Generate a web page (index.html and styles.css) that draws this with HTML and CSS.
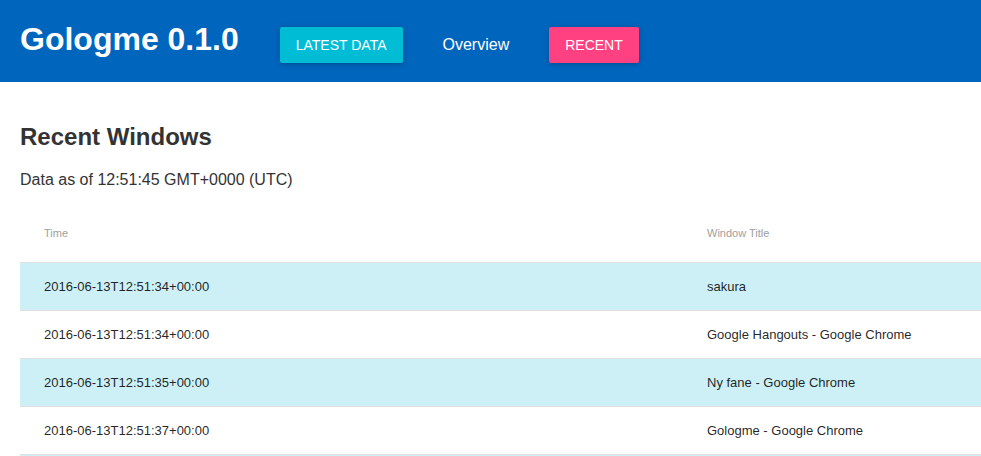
FILE: index.html
```html
<!DOCTYPE html>
<html>
<head>
<meta charset="utf-8">
<link rel="stylesheet" href="styles.css">
</head>
<body>
<header class="appbar">
  <h1 class="title">Gologme 0.1.0</h1>
  <nav class="nav">
    <a class="btn btn-cyan">LATEST DATA</a>
    <a class="btn btn-flat">Overview</a>
    <a class="btn btn-pink">RECENT</a>
  </nav>
</header>
<main class="content">
  <h2 class="heading">Recent Windows</h2>
  <p class="asof">Data as of 12:51:45 GMT+0000 (UTC)</p>
  <table class="table">
    <thead>
      <tr><th class="c1">Time</th><th>Window Title</th></tr>
    </thead>
    <tbody>
      <tr class="stripe"><td>2016-06-13T12:51:34+00:00</td><td>sakura</td></tr>
      <tr><td>2016-06-13T12:51:34+00:00</td><td>Google Hangouts - Google Chrome</td></tr>
      <tr class="stripe"><td>2016-06-13T12:51:35+00:00</td><td>Ny fane - Google Chrome</td></tr>
      <tr><td>2016-06-13T12:51:37+00:00</td><td>Gologme - Google Chrome</td></tr>
      <tr class="stripe"><td>2016-06-13T12:51:40+00:00</td><td>Gologme - Google Chrome</td></tr>
    </tbody>
  </table>
</main>
</body>
</html>
```
FILE: styles.css
```css
html, body {
  margin: 0;
  padding: 0;
  background: #fff;
  font-family: "Liberation Sans", Arial, sans-serif;
  overflow: hidden;
}
.appbar {
  display: flex;
  align-items: center;
  height: 82px;
  padding: 8px 20px 0;
  background: #0065bd;
  box-sizing: border-box;
}
.title {
  margin: 0 41px 0 0;
  font-size: 32px;
  font-weight: bold;
  color: #fff;
  line-height: 36px;
  position: relative;
  top: -6px;
}
.nav {
  display: flex;
  align-items: center;
  gap: 24px;
}
.btn {
  display: inline-block;
  height: 36px;
  line-height: 36px;
  padding: 0 16px;
  font-size: 14px;
  color: #fff;
  border-radius: 2px;
}
.btn-cyan {
  background: #00bcd4;
  box-shadow: 0 1px 6px rgba(0,0,0,0.12), 0 1px 4px rgba(0,0,0,0.12);
}
.btn-pink {
  background: #ff4081;
  box-shadow: 0 1px 6px rgba(0,0,0,0.12), 0 1px 4px rgba(0,0,0,0.12);
}
.btn-flat {
  font-size: 16px;
}
.content {
  padding: 0 0 0 20px;
}
.heading {
  margin: 41px 0 0;
  font-size: 24px;
  line-height: 28px;
  font-weight: bold;
  color: #333;
}
.asof {
  margin: 20px 0 0;
  font-size: 16px;
  line-height: 18px;
  color: #333;
}
.table {
  margin-top: 16px;
  width: 961px;
  border-collapse: collapse;
  table-layout: fixed;
}
.table th {
  height: 57px;
  padding: 0 24px;
  text-align: left;
  font-size: 11px;
  font-weight: normal;
  color: #9e9e9e;
  border-bottom: 1px solid #e0e0e0;
  box-sizing: border-box;
}
.table th.c1 {
  width: 663px;
}
.table td {
  height: 48px;
  padding: 0 24px;
  font-size: 13px;
  color: rgba(0,0,0,0.87);
  border-bottom: 1px solid #e0e0e0;
  box-sizing: border-box;
}
.stripe td {
  background: #ccf0f5;
}
```
